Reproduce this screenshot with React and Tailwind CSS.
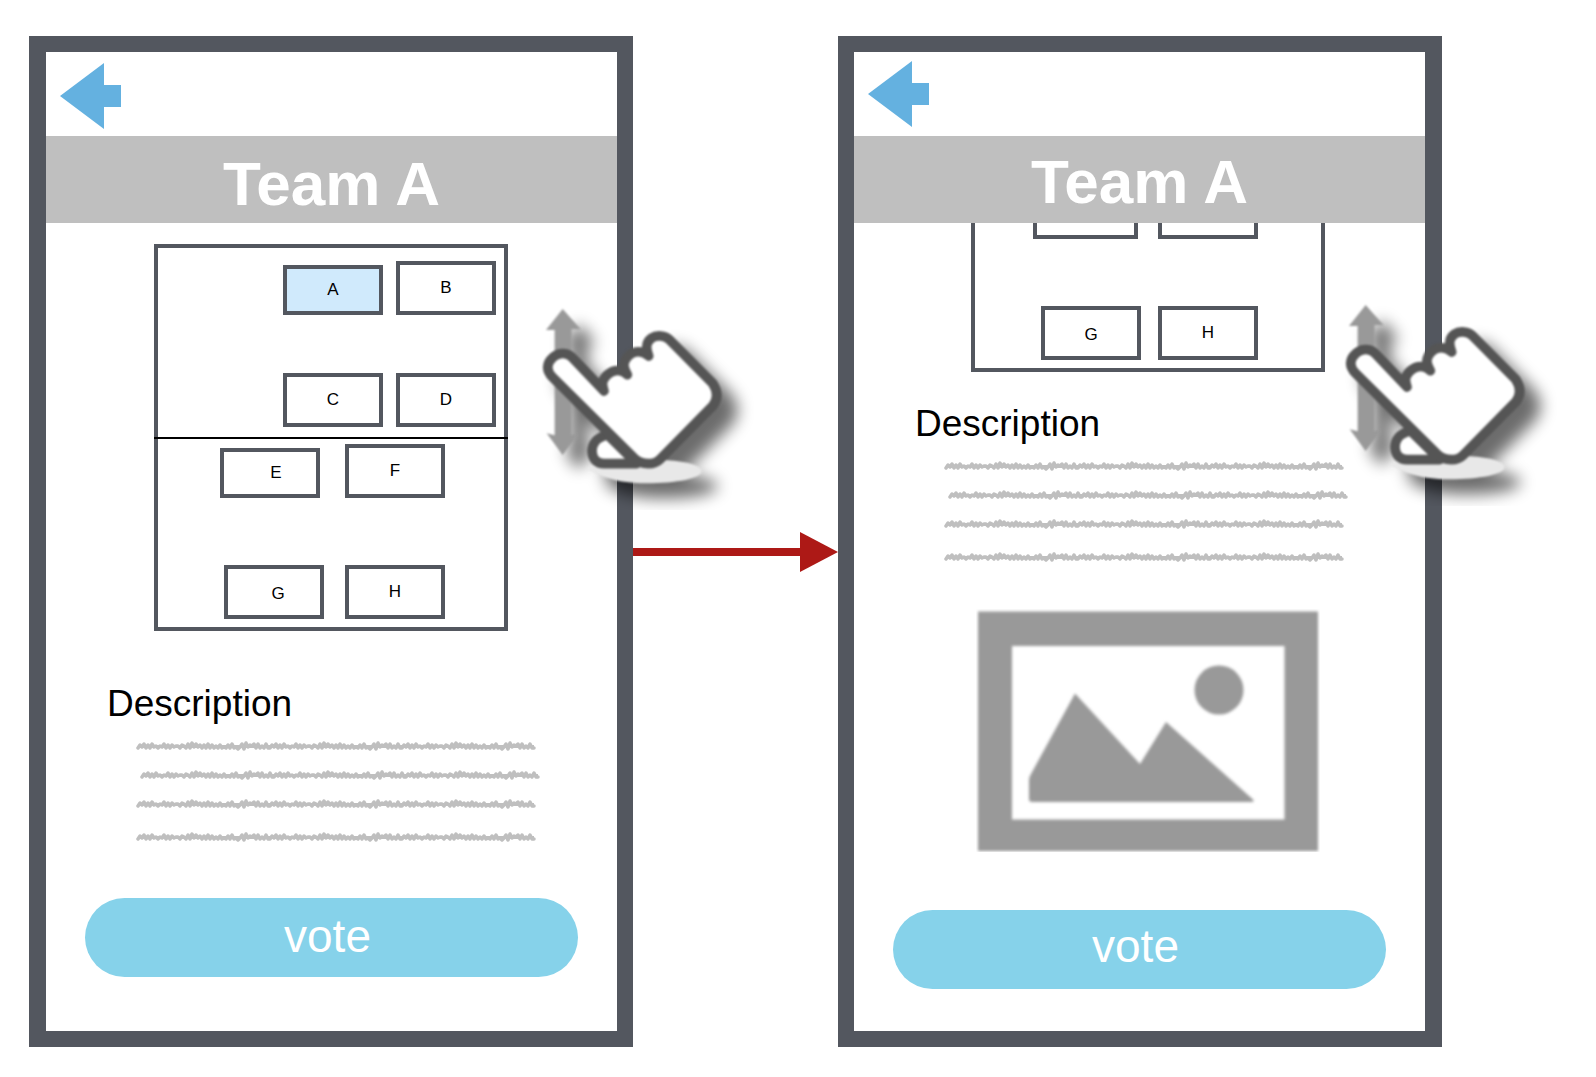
import React from "react";

const WAVE = [6, 3, 5, 2, 6, 3, 6, 2, 5, 4, 6, 4, 5, 2, 6, 3, 6, 3, 5, 4, 4, 6, 3, 4, 6, 2, 6, 1, 5, 2, 5, 3, 6, 3, 6, 2, 6, 3, 6, 4, 6, 3, 6, 5, 6, 3, 6, 2, 6, 5, 7, 5, 2, 7, 1, 5, 3, 4, 2, 6, 2, 6, 4, 6, 2, 6];

const WAVE_POINTS = Array.from({ length: 199 }, (_, i) => `${2 + i * 2},${WAVE[i % WAVE.length]}`).join(" ");

function Scribble({ className }) {
  return (
    <svg viewBox="0 0 400 8" className={`block h-2 w-[400px] overflow-visible ${className}`} aria-hidden="true">
      <polyline points={WAVE_POINTS} fill="none" stroke="#bfbfbf" strokeWidth="3.500" strokeLinejoin="round" strokeLinecap="round" />
      <path d="M2 4.500H398" stroke="#bfbfbf" strokeWidth="3" />
    </svg>
  );
}

function Description({ className }) {
  return (
    <section className={className}>
      <h2 className="pl-[61px] text-[37px] leading-10 text-black">Description</h2>
      <div className="mt-[18px] pl-[90px]">
        <Scribble className="" />
        <Scribble className="mt-[21px] ml-1" />
        <Scribble className="mt-[21px]" />
        <Scribble className="mt-[25px]" />
      </div>
    </section>
  );
}

function Booth({ label, className }) {
  return (
    <div className={`flex items-center justify-center border-4 border-[#53575f] text-[17px] text-black ${className}`}>
      {label}
    </div>
  );
}

function FullPlan() {
  return (
    <div className="mt-[21px] ml-[108px] w-[354px] border-4 border-[#53575f]">
      <div className="-mx-1 border-b-2 border-black px-1 pt-[13px] pb-[10px]">
        <div className="flex items-end justify-end gap-[13px] pr-2">
          <Booth label="A" className="h-[50px] w-[100px] bg-[#d0eafc]" />
          <Booth label="B" className="h-[54px] w-[100px]" />
        </div>
        <div className="mt-[58px] flex justify-end gap-[13px] pr-2">
          <Booth label="C" className="h-[54px] w-[100px]" />
          <Booth label="D" className="h-[54px] w-[100px]" />
        </div>
      </div>
      <div className="pt-[5px] pb-2">
        <div className="flex items-end justify-end gap-[25px] pr-[59px]">
          <Booth label="E" className="h-[50px] w-[100px] pl-3" />
          <Booth label="F" className="h-[54px] w-[100px]" />
        </div>
        <div className="mt-[67px] flex justify-end gap-[21px] pr-[59px]">
          <Booth label="G" className="h-[54px] w-[100px] pt-1 pl-2" />
          <Booth label="H" className="h-[54px] w-[100px]" />
        </div>
      </div>
    </div>
  );
}

function ScrolledPlan() {
  return (
    <div className="ml-[117px] w-[354px] border-4 border-t-0 border-[#53575f] pb-2">
      <div className="flex justify-end gap-5 pr-[63px]">
        <Booth className="h-4 w-[105px] border-t-0" />
        <Booth className="h-4 w-[100px] border-t-0" />
      </div>
      <div className="mt-[67px] flex justify-end gap-[17px] pr-[63px]">
        <Booth label="G" className="h-[54px] w-[100px] pt-1" />
        <Booth label="H" className="h-[54px] w-[100px]" />
      </div>
    </div>
  );
}

function Picture() {
  return (
    <svg viewBox="0 0 344 243" className="mt-12 ml-[122px] block h-[243px] w-[344px]" role="img" aria-label="Picture">
      <defs>
        <filter id="soften" x="-5%" y="-5%" width="110%" height="110%" colorInterpolationFilters="sRGB">
          <feGaussianBlur stdDeviation="1.5" />
        </filter>
      </defs>
      <g fill="#999999" filter="url(#soften)">
        <path fillRule="evenodd" d="M2 2.500H342V242H2ZM36 37V210.500H308.500V37Z" />
        <path d="M99 84.500L164 155L190 113L277 190.500Q279 193 275 193H56Q53 193 53 190V171Q53 168 55 165Z" />
        <circle cx="243" cy="81" r="24.500" />
      </g>
    </svg>
  );
}

function SwipeHand({ className }) {
  return (
    <svg viewBox="0 0 720 660" className={`pointer-events-none absolute h-[220px] w-[240px] ${className}`} role="img" aria-label="Swipe up or down">
      <defs>
        <filter id="shade" filterUnits="userSpaceOnUse" x="0" y="0" width="720" height="660" colorInterpolationFilters="sRGB">
          <feGaussianBlur in="SourceAlpha" stdDeviation="24" />
          <feOffset dx="48" dy="46" />
          <feComponentTransfer>
            <feFuncA type="linear" slope="0.58" />
          </feComponentTransfer>
          <feMerge>
            <feMergeNode />
            <feMergeNode in="SourceGraphic" />
          </feMerge>
        </filter>
        <filter id="soft" filterUnits="userSpaceOnUse" x="0" y="0" width="720" height="660" colorInterpolationFilters="sRGB">
          <feGaussianBlur stdDeviation="3.500" />
        </filter>
      </defs>
      <g filter="url(#shade)">
        <g filter="url(#soft)">
          <path fill="#999999" d="M128 57L182 118H155V434H174L128 495L80 430L104 436V120H78Z" />
          <path fill="#e8e8e8" d="M200 535C240 560 290 580 380 580C470 580 545 565 545 543C545 525 490 512 430 510L300 500Z" />
          <path
            fill="#ffffff"
            stroke="#555555"
            strokeWidth="29"
            strokeLinejoin="round"
            strokeLinecap="round"
            d="M262 434C225 445 216 462 216 485C218 510 232 521 252 521H350Z"
          />
          <path
            fill="#ffffff"
            stroke="#555555"
            strokeWidth="29"
            strokeLinejoin="round"
            strokeLinecap="round"
            d="M252 303L160 206C145 186 116 186 99 202C78 220 78 242 98 262L342 504Q360 521 385 521Q407 521 420 508L578 348Q602 317 578 280L448 149C435 136 410 134 395 144C378 156 376 172 386 198C366 180 340 182 325 198C308 216 308 228 322 254C306 237 280 238 264 253C246 268 244 280 252 303Z"
          />
        </g>
      </g>
    </svg>
  );
}

function Phone({ frameClass, backClass, titleClass, handClass, voteClass, voteTextClass, children }) {
  return (
    <article className={`relative border-[#53575f] bg-white ${frameClass}`}>
      <header className="flex h-[84px] items-start pl-[14px]">
        <button type="button" aria-label="Back" className={`block cursor-pointer ${backClass}`}>
          <svg viewBox="0 0 61 66" className="block h-[66px] w-[61px]">
            <path fill="#64b1e0" d="M0 33L44 0V22H61V44H44V66Z" />
          </svg>
        </button>
      </header>
      <h1 className={`flex h-[87px] items-center justify-center bg-[#bfbfbf] text-[62px] leading-none font-bold text-white ${titleClass}`}>
        Team A
      </h1>
      {children}
      <div className={`px-[39px] ${voteClass}`}>
        <button
          type="button"
          className={`flex h-[79px] w-full cursor-pointer items-center justify-center rounded-full bg-[#86d2ea] pr-2 text-[46px] leading-none text-white ${voteTextClass}`}
        >
          vote
        </button>
      </div>
      <SwipeHand className={handClass} />
    </article>
  );
}

function Connector() {
  return (
    <div className="mt-[496px] flex h-10 items-center" aria-hidden="true">
      <div className="h-2 flex-1 bg-[#ad1916]" />
      <svg viewBox="0 0 38 40" className="block h-10 w-[38px]">
        <path fill="#ad1916" d="M0 0L38 20L0 40Z" />
      </svg>
    </div>
  );
}

export default function App() {
  return (
    <main className="grid min-w-[1400px] grid-cols-[604fr_205fr_604fr] bg-white pt-9 pr-[154px] pb-7 pl-[29px] font-['Liberation_Sans',Arial,sans-serif]">
      <Phone
        frameClass="border-16 border-l-17"
        backClass="mt-[11px]"
        titleClass="pt-2"
        handClass="top-[238px] -right-[143px]"
        voteClass="pt-[57px] pb-[54px]"
        voteTextClass="pb-1"
      >
        <FullPlan />
        <Description className="mt-[53px]" />
      </Phone>
      <Connector />
      <Phone
        frameClass="border-16 border-r-17"
        backClass="mt-[9px]"
        titleClass="pt-1"
        handClass="top-[234px] -right-[138px]"
        voteClass="pt-[58px] pb-[42px]"
        voteTextClass="pb-2"
      >
        <ScrolledPlan />
        <Description className="mt-8" />
        <Picture />
      </Phone>
    </main>
  );
}
